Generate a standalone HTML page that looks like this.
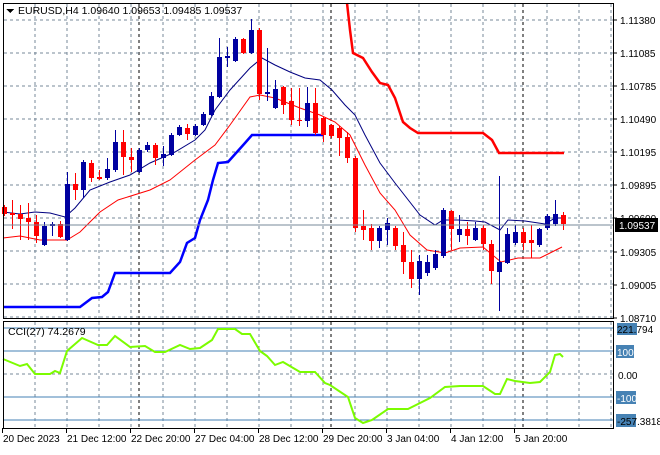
<!DOCTYPE html>
<html><head><meta charset="utf-8"><style>
body{margin:0;background:#fff;width:660px;height:450px;overflow:hidden;font-family:"Liberation Sans",sans-serif}
svg text{font-family:"Liberation Sans",sans-serif;font-size:10px}
</style></head><body>
<svg id="s" width="660" height="450" xmlns="http://www.w3.org/2000/svg" shape-rendering="crispEdges">
<rect width="660" height="450" fill="#fff"/>
<g id="grid"></g>
<g id="ind" shape-rendering="auto"></g>
<g id="c"></g>
<line x1="3" y1="225" x2="613" y2="225" stroke="#778899"/>
<rect x="3.5" y="3.5" width="610" height="315" fill="none" stroke="#000"/>
<rect x="3.5" y="321.5" width="610" height="107" fill="none" stroke="#000"/>
<g id="lab"></g>
<polygon points="6,9 14,9 10,13" fill="#000"/>
<text x="18" y="14" style="font-size:10.5px">EURUSD,H4  1.09640 1.09653 1.09485 1.09537</text>
<text x="8" y="335" style="font-size:10.5px">CCI(27) 74.2679</text>
</svg>
<script>
var NS="http://www.w3.org/2000/svg";
function el(p,t,a,txt){var e=document.createElementNS(NS,t);for(var k in a)e.setAttribute(k,a[k]);if(txt)e.textContent=txt;document.getElementById(p).appendChild(e);}
var gx=[];for(var x=35;x<613;x+=32)gx.push(x);
gx.forEach(function(x){el('grid','line',{x1:x,y1:4,x2:x,y2:318,stroke:'#778899','stroke-dasharray':'3,3'});el('grid','line',{x1:x,y1:322,x2:x,y2:428,stroke:'#778899','stroke-dasharray':'3,3'});});
[139,331,523].forEach(function(x){el('grid','line',{x1:x,y1:4,x2:x,y2:318,stroke:'#000','stroke-dasharray':'3,3'});el('grid','line',{x1:x,y1:322,x2:x,y2:428,stroke:'#000','stroke-dasharray':'3,3'});});
[20,53,86,119,152,185,218,251,284,317].forEach(function(y){el('grid','line',{x1:4,y1:y,x2:613,y2:y,stroke:'#778899','stroke-dasharray':'3,3'});});
[328,351,397,420].forEach(function(y){el('grid','line',{x1:4,y1:y,x2:613,y2:y,stroke:'#4682b4'});});
el('grid','line',{x1:4,y1:374,x2:613,y2:374,stroke:'#778899','stroke-dasharray':'3,3'});
function pl(pts,col,w){el('ind','polyline',{points:pts,fill:'none',stroke:col,'stroke-width':w});}
pl("3,212 20,214 35,212 50,213 65,217 75,208 90,190 110,182 130,175 150,163 175,152 195,140 205,130 215,110 230,90 250,68 262,58 275,65 290,72 305,78 320,80 332,90 345,105 355,115 365,135 380,163 395,183 420,215 435,225 443,220 458,220 475,221 485,222 500,230 508,220 525,221 545,224 555,218 564,218","#000080",1);
pl("3,238 20,236 40,240 67,240 80,232 90,222 100,212 118,200 150,190 170,180 195,160 215,145 230,125 250,97 260,95 275,98 300,108 320,115 335,122 350,135 365,165 380,193 395,210 410,235 427,250 445,253 460,248 483,247 501,262 518,258 540,258 548,254 562,247","#ff0000",1);
pl("3,307 80,307 92,298 102,297 108,292 115,273 170,273 180,262 187,243 195,238 200,220 208,200 213,180 218,163 228,162 245,143 252,135 323,135","#0000ff",2.5);
pl("347,3 350,30 353,53 363,58 372,72 380,83 388,85 395,98 403,122 410,128 418,133 483,133 492,140 499,153 564,153","#ff0000",2.5);
pl("3,359 20,366 27,364 35,374 50,374 55,371 60,373 67,351 82,338 98,345 107,345 115,336 130,347 145,346 155,352 165,352 180,345 190,349 200,348 212,340 218,329 235,329 242,334 250,334 260,351 267,356 275,365 283,362 300,372 315,372 325,383 330,385 348,397 355,418 363,423 372,420 388,409 408,409 430,398 445,387 460,386 483,386 495,394 500,394 507,379 515,381 530,383 540,382 550,372 555,355 560,354 563,357","#7cfc00",2);
var C=[[4,207,214,205,216,'r'],[12,213,215,200,229,'r'],[20,214,219,205,240,'r'],[28,218,222,203,240,'r'],[36,222,236,215,243,'r'],[44,226,245,222,246,'b'],[52,224,226,222,236,'b'],[60,224,237,221,238,'r'],[67,184,240,172,241,'b'],
[75,184,190,173,200,'r'],[83,162,190,160,198,'b'],[91,163,178,160,182,'r'],[99,177,179,170,180,'r'],[107,169,178,158,180,'b'],[115,142,170,130,172,'b'],[123,142,157,130,175,'r'],[131,157,160,148,172,'r'],[139,150,172,148,173,'b'],[147,145,150,142,152,'b'],[155,145,158,143,165,'r'],[163,154,158,146,166,'b'],[171,135,155,133,156,'b'],[179,127,135,125,136,'b'],[187,128,134,124,140,'r'],[195,126,135,124,136,'b'],[203,114,125,112,126,'b'],[211,96,115,92,116,'b'],[219,57,97,38,98,'b'],[227,56,58,47,67,'b'],[235,39,61,37,62,'b'],[243,39,53,38,54,'r'],[251,30,53,19,54,'b'],[259,30,94,28,100,'r'],[267,92,94,48,101,'b'],[275,89,108,80,109,'b'],[283,87,105,86,114,'r'],[291,101,120,88,125,'r'],[299,120,121,88,126,'r'],[307,103,121,87,127,'b'],[315,103,133,88,135,'r'],[323,118,135,117,142,'r'],
[331,125,136,124,138,'r'],[339,128,138,126,156,'r'],[347,137,158,132,163,'r'],[355,158,228,156,232,'r'],[363,226,230,210,240,'r'],[371,228,241,224,250,'r'],[379,228,241,226,248,'b'],[387,223,230,218,245,'b'],[395,228,246,226,250,'r'],[403,245,262,232,274,'r'],[411,262,279,250,288,'r'],[419,261,279,255,295,'b'],[427,262,273,255,276,'b'],[435,254,268,250,270,'b'],[443,210,256,208,258,'b'],[451,211,229,210,250,'r'],[459,229,235,215,242,'b'],[467,229,236,222,245,'r'],[475,228,240,222,241,'b'],[483,228,244,225,250,'r'],[491,244,271,240,284,'r'],[499,262,272,176,311,'b'],[507,234,263,228,264,'b'],[515,232,243,225,245,'b'],[523,232,243,228,250,'r'],[531,240,243,225,258,'r'],[539,229,245,228,247,'b'],[547,216,228,214,230,'b'],[555,214,224,200,226,'b'],[563,215,224,212,230,'r']];
C.forEach(function(k){var col=k[5]=='r'?'#ff0000':'#0000a0';el('c','line',{x1:k[0]+0.5,y1:k[3],x2:k[0]+0.5,y2:k[4],stroke:col});el('c','rect',{x:k[0]-2,y:k[1],width:5,height:Math.max(1,k[2]-k[1]),fill:col});});
[["1.11380",22],["1.11085",55],["1.10785",88],["1.10490",121],["1.10195",154],["1.09895",187],["1.09600",220],["1.09305",254],["1.09005",287],["1.08710",320]].forEach(function(a){el('lab','line',{x1:613,y1:a[1]-2,x2:617,y2:a[1]-2,stroke:'#000'});el('lab','text',{x:620,y:a[1]+2},a[0]);});
el('lab','rect',{x:615,y:218,width:43,height:14,fill:'#000'});el('lab','text',{x:619,y:229,fill:'#fff'},"1.09537");
el('lab','rect',{x:617,y:323,width:20,height:12,fill:'#4682b4'});el('lab','text',{x:617,y:333},"221.794");
el('lab','rect',{x:616,y:345,width:18,height:13,fill:'#4682b4'});el('lab','text',{x:617,y:356,fill:'#fff'},"100");
el('lab','text',{x:618,y:379},"0.00");
el('lab','rect',{x:616,y:391,width:20,height:13,fill:'#4682b4'});el('lab','text',{x:617,y:402,fill:'#fff'},"-100");
el('lab','rect',{x:616,y:414,width:20,height:13,fill:'#4682b4'});el('lab','text',{x:617,y:425},"-257.3818");
[["20 Dec 2023",2],["21 Dec 12:00",66],["22 Dec 20:00",130],["27 Dec 04:00",194],["28 Dec 12:00",258],["29 Dec 20:00",322],["3 Jan 04:00",386],["4 Jan 12:00",450],["5 Jan 20:00",514]].forEach(function(a){el('lab','text',{x:a[1]+1,y:442},a[0]);el('lab','line',{x1:a[1]+0.5,y1:428,x2:a[1]+0.5,y2:433,stroke:'#000'});});
</script>
</body></html>
